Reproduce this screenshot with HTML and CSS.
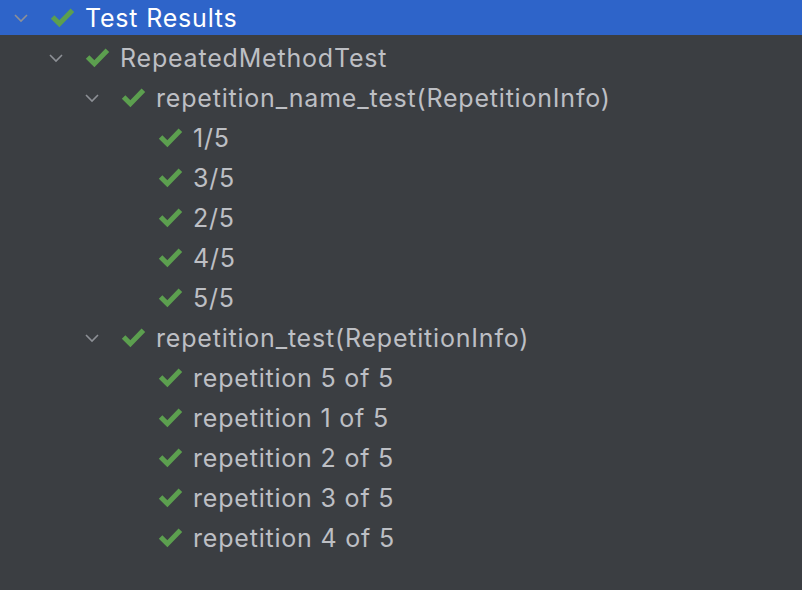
FILE: index.html
```html
<!DOCTYPE html>
<html>
<head>
<meta charset="utf-8">
<link rel="stylesheet" href="styles.css">
</head>
<body>
<svg width="0" height="0" class="defs">
  <defs>
    <symbol id="chev" viewBox="0 0 16 10"><polyline points="2,2 8,8 14,2" fill="none" stroke="#8d9096" stroke-width="1.6"/></symbol>
    <symbol id="check" viewBox="0 0 24 20"><polyline points="2.5,9.5 9,16 21.5,3" fill="none" stroke="#5c9f4f" stroke-width="4.8"/></symbol>
  </defs>
</svg>
<ul class="tree">
  <li class="row selected l0"><svg class="chev"><use href="#chev"/></svg><svg class="check"><use href="#check"/></svg><span class="label">Test Results</span></li>
  <li class="row l1"><svg class="chev"><use href="#chev"/></svg><svg class="check"><use href="#check"/></svg><span class="label">RepeatedMethodTest</span></li>
  <li class="row l2"><svg class="chev"><use href="#chev"/></svg><svg class="check"><use href="#check"/></svg><span class="label">repetition_name_test(RepetitionInfo)</span></li>
  <li class="row l3 leaf"><svg class="check"><use href="#check"/></svg><span class="label">1/5</span></li>
  <li class="row l3 leaf"><svg class="check"><use href="#check"/></svg><span class="label">3/5</span></li>
  <li class="row l3 leaf"><svg class="check"><use href="#check"/></svg><span class="label">2/5</span></li>
  <li class="row l3 leaf"><svg class="check"><use href="#check"/></svg><span class="label">4/5</span></li>
  <li class="row l3 leaf"><svg class="check"><use href="#check"/></svg><span class="label">5/5</span></li>
  <li class="row l2"><svg class="chev"><use href="#chev"/></svg><svg class="check"><use href="#check"/></svg><span class="label">repetition_test(RepetitionInfo)</span></li>
  <li class="row l3 leaf"><svg class="check"><use href="#check"/></svg><span class="label">repetition 5 of 5</span></li>
  <li class="row l3 leaf"><svg class="check"><use href="#check"/></svg><span class="label">repetition 1 of 5</span></li>
  <li class="row l3 leaf"><svg class="check"><use href="#check"/></svg><span class="label">repetition 2 of 5</span></li>
  <li class="row l3 leaf"><svg class="check"><use href="#check"/></svg><span class="label">repetition 3 of 5</span></li>
  <li class="row l3 leaf"><svg class="check"><use href="#check"/></svg><span class="label">repetition 4 of 5</span></li>
</ul>
</body>
</html>
```
FILE: styles.css
```css
html, body {
  margin: 0;
  padding: 0;
  background: #3b3e42;
  height: 100%;
  overflow: hidden;
}
.defs { position: absolute; }
.tree {
  list-style: none;
  margin: 0;
  padding: 0;
  display: flex;
  flex-direction: column;
  gap: 5px;
  font-family: Inter, "Noto Sans", sans-serif;
  font-size: 25px;
  letter-spacing: 0.8px;
  color: #bdbfc4;
}
.row {
  height: 35px;
  display: flex;
  align-items: center;
}
.row.selected {
  background: #2e64c9;
  color: #ffffff;
}
.l0 { padding-left: 13px; }
.l1 { padding-left: 48px; }
.l2 { padding-left: 84px; }
.l3 { padding-left: 121px; }
.chev {
  width: 16px;
  height: 10px;
  margin-right: 21px;
  flex: none;
}
.leaf .check { margin-left: 37px; }
.check {
  width: 25px;
  height: 21px;
  margin-right: 10px;
  flex: none;
}
.label {
  white-space: nowrap;
}
```
